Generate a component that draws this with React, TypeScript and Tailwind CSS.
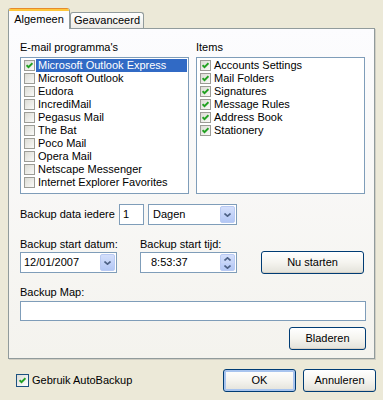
import type { ReactNode } from "react";

const emailPrograms = [
  "Microsoft Outlook Express",
  "Microsoft Outlook",
  "Eudora",
  "IncrediMail",
  "Pegasus Mail",
  "The Bat",
  "Poco Mail",
  "Opera Mail",
  "Netscape Messenger",
  "Internet Explorer Favorites",
];

const backupItems = [
  "Accounts Settings",
  "Mail Folders",
  "Signatures",
  "Message Rules",
  "Address Book",
  "Stationery",
];

function CheckMark() {
  return (
    <svg width="7" height="7" viewBox="0 0 7 7" className="block">
      <polyline points="0.5,3.2 2.5,5.2 6.5,1.2" fill="none" stroke="#21A121" strokeWidth="2" />
    </svg>
  );
}

function ListCheck({ checked }: { checked: boolean }) {
  return (
    <span className="flex h-[11px] w-[11px] shrink-0 items-center justify-center border border-[#9C9C96] bg-gradient-to-br from-[#DCDCD5] to-[#FAFAF8]">
      {checked && <CheckMark />}
    </span>
  );
}

function ListBox({ items, checked, selected }: { items: string[]; checked: boolean; selected?: number }) {
  return (
    <div className="mt-[3px] h-[137px] w-[169px] border border-[#7F9DB9] bg-white py-[1px] pl-[3px] pr-[1px]">
      {items.map((item, idx) => (
        <div key={item} className="flex h-[13px] items-center">
          <ListCheck checked={checked || idx === selected} />
          <span
            className={
              idx === selected
                ? "ml-[1px] flex h-[13px] flex-1 items-center whitespace-nowrap bg-[#316AC5] pl-[2px] text-white"
                : "ml-[1px] flex h-[13px] flex-1 items-center whitespace-nowrap pl-[2px]"
            }
          >
            {item}
          </span>
        </div>
      ))}
    </div>
  );
}

function XpButton({ children, className, isDefault }: { children: ReactNode; className: string; isDefault?: boolean }) {
  return (
    <button
      type="button"
      className={
        "flex items-center justify-center rounded-[3px] border border-[#003C74] bg-gradient-to-b from-white via-[#F5F4EF] to-[#E3E2DA] " +
        (isDefault ? "shadow-[inset_0_0_0_2px_#A8C4EE] " : "shadow-[inset_0_-1px_0_#D6D0C5] ") +
        className
      }
    >
      {children}
    </button>
  );
}

function Chevron({ up }: { up?: boolean }) {
  return (
    <svg width="7" height="4" viewBox="0 0 7 4" className="block">
      <polyline
        points={up ? "0.5,3.5 3.5,0.8 6.5,3.5" : "0.5,0.5 3.5,3.2 6.5,0.5"}
        fill="none"
        stroke="#4D6185"
        strokeWidth="1.6"
      />
    </svg>
  );
}

function DropButton() {
  return (
    <span className="flex h-[17px] w-[15px] items-center justify-center rounded-[2px] border border-[#B9CAF3] bg-gradient-to-b from-[#D4DFFB] to-[#B3C7F5]">
      <Chevron />
    </span>
  );
}

export default function App() {
  return (
    <div className="h-[400px] w-[383px] bg-[#ECE9D8] pl-[8px] pt-[8px] font-['Liberation_Sans',Arial,sans-serif] text-[11px] leading-[13px] text-black">
      {/* tabs */}
      <div className="flex h-[20px] items-end">
        <div className="relative z-10 mb-[-1px] flex h-[21px] w-[62px] flex-col overflow-hidden rounded-t-[3px] border-x border-[#919B9C] bg-[#FCFCFE]">
          <div className="h-[1px] bg-[#E68B2C]" />
          <div className="h-[2px] bg-[#FFC73C]" />
          <div className="flex flex-1 items-center justify-center pb-[1px]">Algemeen</div>
        </div>
        <div className="flex h-[16px] w-[74px] items-center justify-center rounded-t-[3px] border-x border-t border-[#919B9C] bg-gradient-to-b from-white to-[#ECEBE6]">
          Geavanceerd
        </div>
      </div>

      {/* tab page */}
      <div className="h-[331px] w-[367px] border border-[#919B9C] bg-gradient-to-b from-[#FCFCFE] to-[#F4F3EE] pl-[11px] pt-[12px] shadow-[1px_1px_0_#D0CEC3]">
        <div className="flex w-[346px] flex-col">
          <div className="flex gap-[7px]">
            <div className="flex flex-col">
              <span>E-mail programma's</span>
              <ListBox items={emailPrograms} checked={false} selected={0} />
            </div>
            <div className="flex flex-col">
              <span>Items</span>
              <ListBox items={backupItems} checked />
            </div>
          </div>

          <div className="mt-[10px] flex h-[21px] items-center">
            <span className="w-[99px] whitespace-nowrap">Backup data iedere</span>
            <div className="flex h-[21px] w-[25px] items-center border border-[#7F9DB9] bg-white pl-[3px]">1</div>
            <div className="ml-[4px] flex h-[21px] w-[89px] items-center justify-between border border-[#7F9DB9] bg-white pl-[4px] pr-[1px]">
              <span>Dagen</span>
              <DropButton />
            </div>
          </div>

          <div className="mt-[13px] flex items-end">
            <div className="flex w-[97px] flex-col">
              <span className="whitespace-nowrap">Backup start datum:</span>
              <div className="mt-[1px] flex h-[21px] items-center justify-between border border-[#7F9DB9] bg-white pl-[3px] pr-[1px]">
                <span>12/01/2007</span>
                <DropButton />
              </div>
            </div>
            <div className="ml-[23px] flex w-[97px] flex-col">
              <span className="whitespace-nowrap">Backup start tijd:</span>
              <div className="mt-[1px] flex h-[21px] items-center justify-between border border-[#7F9DB9] bg-white pl-[10px] pr-[1px]">
                <span>8:53:37</span>
                <span className="flex h-[17px] w-[15px] flex-col overflow-hidden rounded-[2px] border border-[#B9CAF3] bg-gradient-to-b from-[#D4DFFB] to-[#B3C7F5]">
                  <span className="flex flex-1 items-center justify-center border-b border-[#C9D6F6]">
                    <Chevron up />
                  </span>
                  <span className="flex flex-1 items-center justify-center">
                    <Chevron />
                  </span>
                </span>
              </div>
            </div>
            <XpButton className="mb-[-1px] ml-[24px] h-[23px] w-[103px]">Nu starten</XpButton>
          </div>

          <span className="mt-[13px]">Backup Map:</span>
          <div className="mt-[2px] h-[20px] w-[346px] border border-[#7F9DB9] bg-white" />
          <XpButton className="mt-[6px] h-[23px] w-[77px] self-end">Bladeren</XpButton>
        </div>
      </div>

      {/* bottom row */}
      <div className="mt-[10px] flex h-[23px] w-[368px] items-center">
        <span className="ml-[8px] flex h-[13px] w-[13px] items-center justify-center border border-[#1C5180] bg-gradient-to-br from-[#DCDCD7] to-white">
          <CheckMark />
        </span>
        <span className="ml-[3px]">Gebruik AutoBackup</span>
        <XpButton isDefault className="ml-auto h-[23px] w-[73px]">OK</XpButton>
        <XpButton className="ml-[7px] h-[23px] w-[73px]">Annuleren</XpButton>
      </div>
    </div>
  );
}
